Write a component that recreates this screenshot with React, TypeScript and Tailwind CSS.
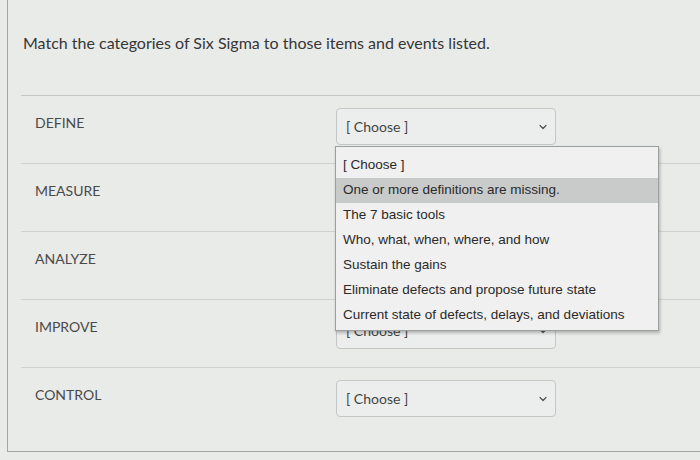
import { ChevronDown } from "lucide-react";

const categories = ["DEFINE", "MEASURE", "ANALYZE", "IMPROVE", "CONTROL"];

const options = [
  "[ Choose ]",
  "One or more definitions are missing.",
  "The 7 basic tools",
  "Who, what, when, where, and how",
  "Sustain the gains",
  "Eliminate defects and propose future state",
  "Current state of defects, delays, and deviations",
];

// covered = fully hidden behind the open list in the screenshot
const SelectBox = ({ open, covered }: { open?: boolean; covered?: boolean }) => (
  <div className="relative">
    <div className="flex h-[37px] w-[220px] items-center justify-between rounded-[4px] border border-[#c3c7c6] bg-[#eceeed] pl-[9px] pr-[6px]">
      <span className={`text-[14px] text-[#444] ${covered ? "invisible" : ""}`}>[ Choose ]</span>
      <ChevronDown className="h-[12px] w-[12px] text-[#555]" strokeWidth={2.5} />
    </div>
    {open && (
      <div className="absolute left-[-1px] top-[38px] z-10 w-[324px] border border-[#9d9f9e] bg-[#eff0ef] pb-[2px] pt-[6px] font-['Liberation_Sans',Arial,sans-serif] shadow-[1px_2px_3px_rgba(0,0,0,0.25)]">
        {options.map((opt, i) => (
          <div
            key={opt}
            className={`flex h-[25px] items-center px-[7px] text-[13.5px] text-[#2a2a2a] ${i === 1 ? "bg-[#c9cbca]" : ""}`}
          >
            {opt}
          </div>
        ))}
      </div>
    )}
  </div>
);

export default function App() {
  return (
    <div className="h-[460px] w-[700px] overflow-hidden bg-[#e9ebe9] font-['Lato','Noto_Sans',sans-serif]">
      <div className="ml-[7px] h-[452px] border-b border-l border-[#a3a5a4] pt-[31px]">
        <p className="pl-[15px] text-[16px] leading-[24px] text-[#363636]">
          Match the categories of Six Sigma to those items and events listed.
        </p>
        <div className="ml-[13px] mt-[40px] border-t border-[#c5c8c6]">
          {categories.map((cat, i) => (
            <div
              key={cat}
              className={`flex h-[68px] items-start ${i < categories.length - 1 ? "border-b border-[#cfd2d0]" : ""}`}
            >
              <div className="w-[315px] pl-[14px] pt-[17px] text-[14px] leading-[20px] text-[#4a4a4a]">{cat}</div>
              <div className="pt-[12px]">
                <SelectBox open={i === 0} covered={i === 1 || i === 2} />
              </div>
            </div>
          ))}
        </div>
      </div>
    </div>
  );
}
